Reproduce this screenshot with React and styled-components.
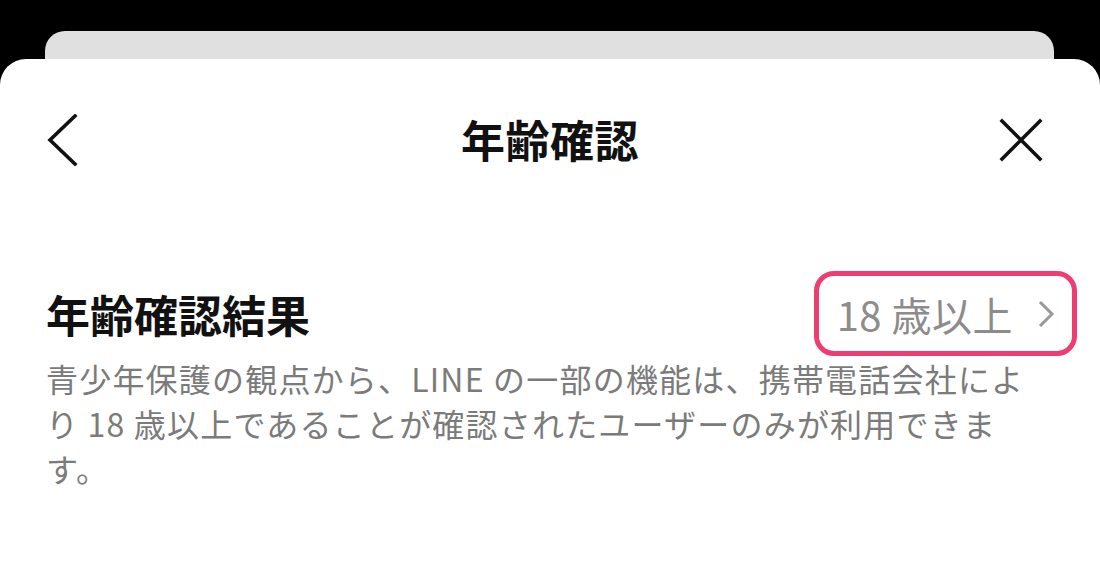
import React from 'react'
import styled, { createGlobalStyle } from "styled-components";

const Global = createGlobalStyle`
  html, body {
    margin: 0;
    padding: 0;
    background: #000;
  }
  body {
    font-family: "Noto Sans CJK JP", "Noto Sans", sans-serif;
    -webkit-font-smoothing: antialiased;
  }
`;

export default function App() {
  return (
    <Page>
      <Global />
      <BackCard />
      <Sheet>
        <Header>
          <IconButton aria-label="戻る">
            <svg width="32" height="52" viewBox="0 0 32 52" fill="none">
              <path d="M29 2 L4 26 L29 50" stroke="#111" strokeWidth="3.6" strokeLinecap="square" />
            </svg>
          </IconButton>
          <Title>年齢確認</Title>
          <IconButton aria-label="閉じる" $right>
            <svg width="44" height="44" viewBox="0 0 44 44" fill="none">
              <path d="M3 3 L41 41 M41 3 L3 41" stroke="#111" strokeWidth="3.6" strokeLinecap="square" />
            </svg>
          </IconButton>
        </Header>

        <Row>
          <RowLabel>年齢確認結果</RowLabel>
          <ResultBox>
            <ResultText>18 歳以上</ResultText>
            <svg width="18" height="28" viewBox="0 0 18 28" fill="none">
              <path d="M3 2 L15 14 L3 26" stroke="#999" strokeWidth="3" />
            </svg>
          </ResultBox>
        </Row>

        <Description>
          青少年保護の観点から、LINE の一部の機能は、携帯電話会社によ<br />
          り 18 歳以上であることが確認されたユーザーのみが利用できま<br />
          す。
        </Description>
      </Sheet>
    </Page>
  );
}

const Page = styled.div`
  display: flex;
  flex-direction: column;
  height: 571px;
  padding-top: 31px;
  box-sizing: border-box;
  overflow: hidden;
`;

const BackCard = styled.div`
  height: 28px;
  margin: 0 46px 0 45px;
  background: #e0e0e0;
  border-radius: 20px 20px 0 0;
  flex-shrink: 0;
`;

const Sheet = styled.div`
  flex: 1;
  background: #fff;
  border-radius: 26px 26px 0 0;
  padding: 40px 46px 0 46px;
  display: flex;
  flex-direction: column;
`;

const Header = styled.div`
  display: grid;
  grid-template-columns: 1fr auto 1fr;
  align-items: center;
  height: 80px;
`;

const IconButton = styled.button`
  border: none;
  background: none;
  padding: 0;
  display: flex;
  align-items: center;
  justify-content: center;
  margin-top: 2px;
  justify-self: ${p => (p.$right ? "end" : "start")};
  margin-right: ${p => (p.$right ? "11px" : "0")};
`;

const Title = styled.h1`
  margin: 0;
  font-size: 44px;
  font-weight: 700;
  color: #111;
  letter-spacing: 0.5px;
`;

const Row = styled.div`
  display: flex;
  align-items: center;
  justify-content: space-between;
  margin-top: 92px;
  margin-right: -23px;
`;

const RowLabel = styled.h2`
  margin: 0;
  font-size: 44px;
  font-weight: 700;
  color: #111;
`;

const ResultBox = styled.div`
  display: flex;
  align-items: center;
  gap: 24px;
  height: 85px;
  box-sizing: border-box;
  padding: 0 17px 0 18px;
  border: 5px solid #ee3d72;
  border-radius: 20px;
`;

const ResultText = styled.span`
  font-size: 40px;
  color: #8c8c8c;
  letter-spacing: 0.5px;
`;

const Description = styled.p`
  margin: 0;
  font-size: 32px;
  line-height: 45px;
  color: #7b7b7b;
  letter-spacing: 1.2px;
  white-space: nowrap;
`;
